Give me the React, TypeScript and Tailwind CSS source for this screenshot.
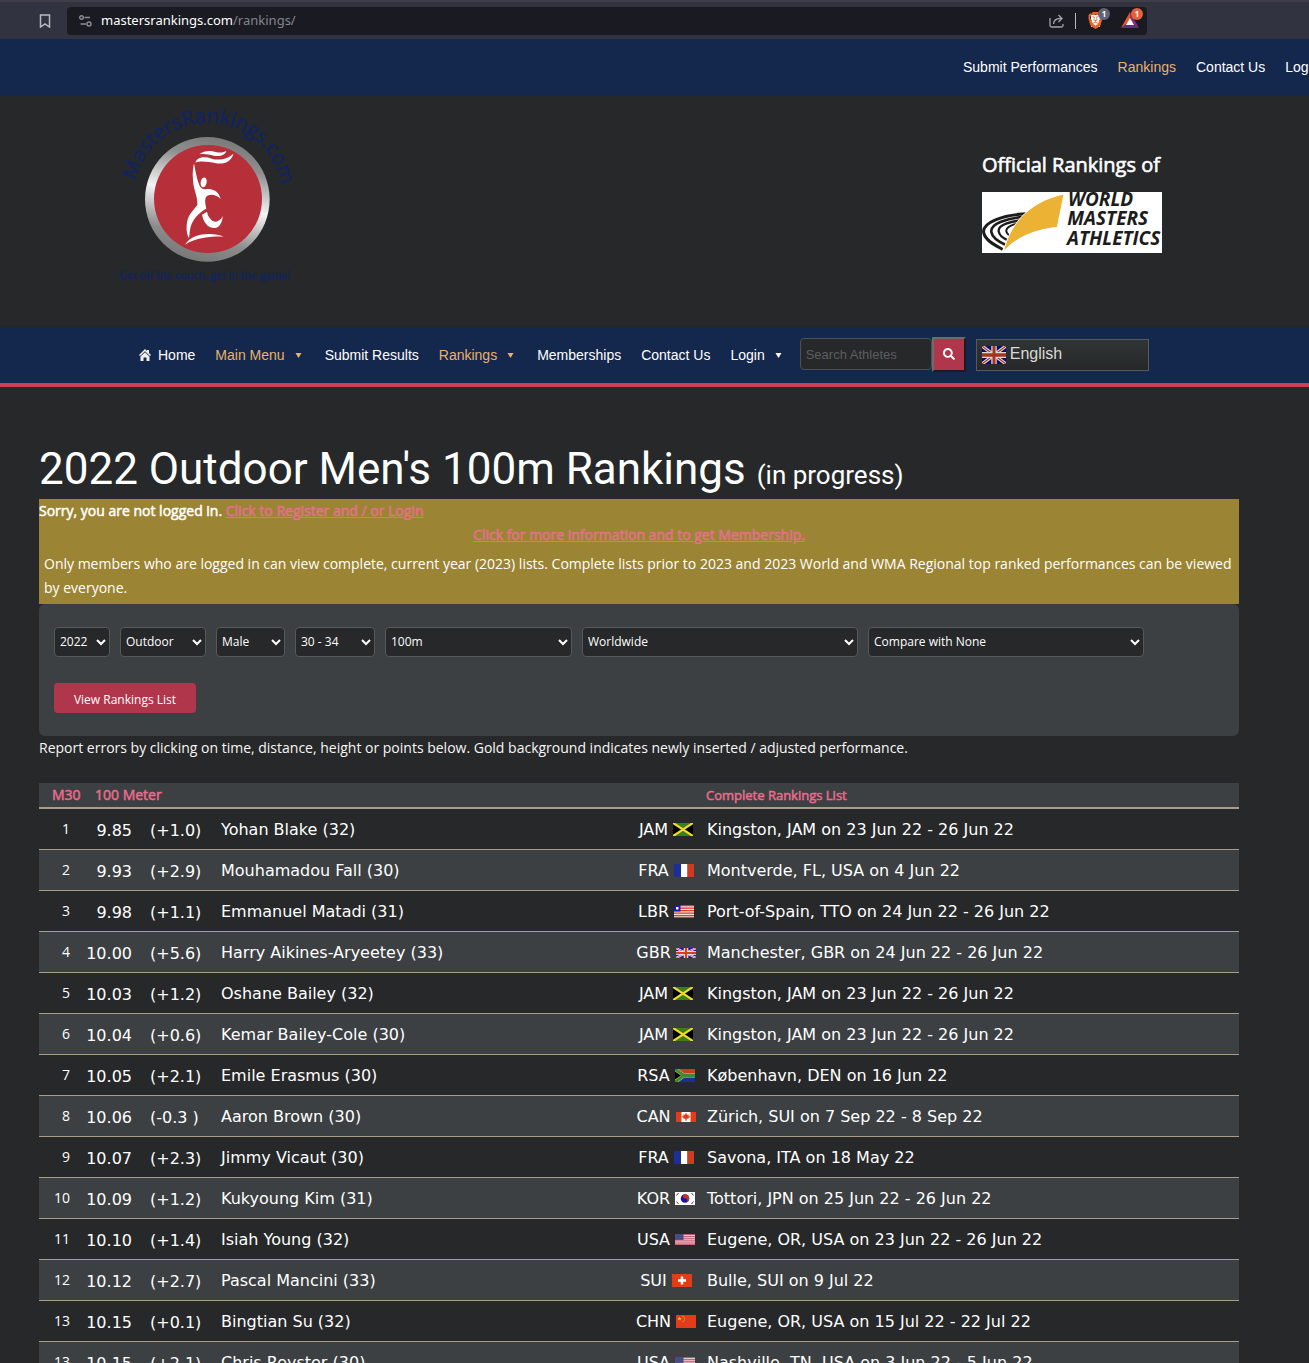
import React from "react";
import { SiBrave } from "react-icons/si";
import { FaSearch } from "react-icons/fa";

type Row = {
  rank: number;
  time: string;
  wind: string;
  name: string;
  code: string;
  place: string;
};

const rows: Row[] = [
  { rank: 1, time: "9.85", wind: "(+1.0)", name: "Yohan Blake (32)", code: "JAM", place: "Kingston, JAM on 23 Jun 22 - 26 Jun 22" },
  { rank: 2, time: "9.93", wind: "(+2.9)", name: "Mouhamadou Fall (30)", code: "FRA", place: "Montverde, FL, USA on 4 Jun 22" },
  { rank: 3, time: "9.98", wind: "(+1.1)", name: "Emmanuel Matadi (31)", code: "LBR", place: "Port-of-Spain, TTO on 24 Jun 22 - 26 Jun 22" },
  { rank: 4, time: "10.00", wind: "(+5.6)", name: "Harry Aikines-Aryeetey (33)", code: "GBR", place: "Manchester, GBR on 24 Jun 22 - 26 Jun 22" },
  { rank: 5, time: "10.03", wind: "(+1.2)", name: "Oshane Bailey (32)", code: "JAM", place: "Kingston, JAM on 23 Jun 22 - 26 Jun 22" },
  { rank: 6, time: "10.04", wind: "(+0.6)", name: "Kemar Bailey-Cole (30)", code: "JAM", place: "Kingston, JAM on 23 Jun 22 - 26 Jun 22" },
  { rank: 7, time: "10.05", wind: "(+2.1)", name: "Emile Erasmus (30)", code: "RSA", place: "København, DEN on 16 Jun 22" },
  { rank: 8, time: "10.06", wind: "(-0.3 )", name: "Aaron Brown (30)", code: "CAN", place: "Zürich, SUI on 7 Sep 22 - 8 Sep 22" },
  { rank: 9, time: "10.07", wind: "(+2.3)", name: "Jimmy Vicaut (30)", code: "FRA", place: "Savona, ITA on 18 May 22" },
  { rank: 10, time: "10.09", wind: "(+1.2)", name: "Kukyoung Kim (31)", code: "KOR", place: "Tottori, JPN on 25 Jun 22 - 26 Jun 22" },
  { rank: 11, time: "10.10", wind: "(+1.4)", name: "Isiah Young (32)", code: "USA", place: "Eugene, OR, USA on 23 Jun 22 - 26 Jun 22" },
  { rank: 12, time: "10.12", wind: "(+2.7)", name: "Pascal Mancini (33)", code: "SUI", place: "Bulle, SUI on 9 Jul 22" },
  { rank: 13, time: "10.15", wind: "(+0.1)", name: "Bingtian Su (32)", code: "CHN", place: "Eugene, OR, USA on 15 Jul 22 - 22 Jul 22" },
  { rank: 13, time: "10.15", wind: "(+2.1)", name: "Chris Royster (30)", code: "USA", place: "Nashville, TN, USA on 3 Jun 22 - 5 Jun 22" },
];

const flagHeights: Record<string, number> = {
  JAM: 13, FRA: 13, LBR: 13, GBR: 10, RSA: 13, CAN: 10, KOR: 13, USA: 11, SUI: 13, CHN: 13,
};

function UnionJack() {
  return (
    <>
      <rect width="40" height="26" fill="#0d0c68" />
      <path d="M0 0L40 26M40 0L0 26" stroke="#dcdad8" strokeWidth="5" />
      <path d="M0 0L40 26M40 0L0 26" stroke="#a8321e" strokeWidth="1.6" />
      <path d="M20 0V26M0 13H40" stroke="#dcdad8" strokeWidth="9" />
      <path d="M20 0V26M0 13H40" stroke="#a8321e" strokeWidth="5" />
    </>
  );
}

function Flag({ code }: { code: string }) {
  const art: Record<string, React.ReactNode> = {
    JAM: (
      <>
        <rect width="40" height="26" fill="#3f7d1c" />
        <path d="M0 0L18 13L0 26ZM40 0L22 13L40 26Z" fill="#000" />
        <path d="M0 0L40 26M40 0L0 26" stroke="#f0dc28" strokeWidth="4.5" />
      </>
    ),
    FRA: (
      <>
        <rect width="14" height="26" fill="#1c2f96" />
        <rect x="14" width="13" height="26" fill="#fff" />
        <rect x="27" width="13" height="26" fill="#cc3d20" />
      </>
    ),
    LBR: (
      <>
        <rect width="40" height="26" fill="#f3e4e2" />
        {[0, 5, 10, 15, 20, 24].map((y) => (
          <rect key={y} y={y} width="40" height="2.6" fill="#d8402c" />
        ))}
        <rect width="13" height="13" fill="#1a1aa8" />
        <rect x="4" y="4" width="5" height="5" fill="#fff" />
      </>
    ),
    GBR: (
      <>
        <rect width="40" height="26" fill="#1414b4" />
        <path d="M0 0L40 26M40 0L0 26" stroke="#fff" strokeWidth="5" />
        <path d="M0 0L40 26M40 0L0 26" stroke="#e03a1c" strokeWidth="2" />
        <path d="M20 0V26M0 13H40" stroke="#fff" strokeWidth="9" />
        <path d="M20 0V26M0 13H40" stroke="#e03a1c" strokeWidth="5" />
      </>
    ),
    RSA: (
      <>
        <rect width="40" height="13" fill="#cc3d20" />
        <rect y="13" width="40" height="13" fill="#1c2f96" />
        <path d="M0 0L18 13H40M18 13L0 26" stroke="#c9cdb0" strokeWidth="8" fill="none" />
        <path d="M0 0L17 13L0 26Z" fill="#000" />
        <path d="M0 3L14 13L0 23" stroke="#e0c030" strokeWidth="3" fill="none" />
        <path d="M0 0L18 13H40M18 13L0 26" stroke="#3f8a2c" strokeWidth="6" fill="none" />
      </>
    ),
    CAN: (
      <>
        <rect width="40" height="26" fill="#fff" />
        <rect width="11" height="26" fill="#e23c1a" />
        <rect x="29" width="11" height="26" fill="#e23c1a" />
        <path d="M20 3L22 8L25 7L24 11L28 11L25 16L20 17.500L15 16L12 11L16 11L15 7L18 8ZM19.300 16H20.700V22H19.300Z" fill="#e23c1a" stroke="#e23c1a" />
      </>
    ),
    KOR: (
      <>
        <rect width="40" height="26" fill="#fff" />
        <circle cx="20" cy="13" r="8.500" fill="#1414a8" />
        <path d="M20 4.500A8.500 8.500 0 0 1 21 21.400A4.200 4.200 0 0 0 20 13A4.200 4.200 0 0 1 20 4.500Z" fill="#c83220" />
        <path d="M3 7L7 2M33 2L37 7M3 19L7 24M33 24L37 19" stroke="#444" strokeWidth="2" />
      </>
    ),
    USA: (
      <>
        <rect width="40" height="26" fill="#ecd9dc" />
        {[0, 5, 10, 15, 20, 24].map((y) => (
          <rect key={y} y={y} width="40" height="2.6" fill="#c0566a" />
        ))}
        <rect width="17" height="14" fill="#4a4a86" />
      </>
    ),
    SUI: (
      <>
        <rect width="40" height="26" fill="#e23c1a" />
        <path d="M20 5V21M12 13H28" stroke="#fff" strokeWidth="5" />
      </>
    ),
    CHN: (
      <>
        <rect width="40" height="26" fill="#e23c1a" />
        <path d="M7 3L8.300 6H11L9 8L10 11L7 9L4 11L5 8L3 6H5.700Z" fill="#f2c52c" />
        <path d="M13 2H15V4H13ZM16 5H18V7H16ZM16 9H18V11H16ZM13 12H15V14H13Z" fill="#f2a52c" />
      </>
    ),
  };
  return (
    <svg width="20" height={flagHeights[code]} viewBox="0 0 40 26" preserveAspectRatio="none" aria-label={code}>
      {art[code]}
    </svg>
  );
}

function Caret() {
  return (
    <svg className="ml-[10px] mr-[3px]" width="7" height="5" viewBox="0 0 7 5" fill="currentColor" aria-hidden>
      <path d="M0.500 0H6.500L3.500 5Z" />
    </svg>
  );
}

function BrowserBar() {
  return (
    <div className="flex h-[39px] items-center border-t-2 border-[#3d3e47] bg-[#313341] pl-[39px] font-['Noto_Sans',sans-serif]">
      <button aria-label="Bookmark" className="mr-4 text-[#b9bac0]">
        <svg width="12" height="14" viewBox="0 0 12 14" fill="none" stroke="currentColor" strokeWidth="1.500">
          <path d="M1.500 1H10.500V13L6 9.800L1.500 13Z" />
        </svg>
      </button>
      <div className="flex h-7 w-[1080px] items-center rounded bg-[#191a22] pr-1 pl-3">
        <svg width="13" height="12" viewBox="0 0 13 12" fill="none" stroke="#8d8e94" strokeWidth="1.400" aria-hidden>
          <circle cx="2.500" cy="2.500" r="1.800" />
          <path d="M5.500 2.500H11M1.500 9H7" />
          <circle cx="10" cy="9" r="2" />
        </svg>
        <p className="ml-[9px] flex-1 text-[13px] text-[#85868c]">
          <span className="text-white">mastersrankings.com</span>/rankings/
        </p>
        <button aria-label="Share" className="text-[#a3a4a9]">
          <svg width="15" height="14" viewBox="0 0 15 14" fill="none" stroke="currentColor" strokeWidth="1.300">
            <path d="M1 4V11.500Q1 13 2.500 13H12.500Q14 13 14 11.500V10" />
            <path d="M9.500 1L13 4.500L9.500 8M13 4.500H11Q5 4.500 4.500 10" />
          </svg>
        </button>
        <span className="ml-[11px] h-4 w-px bg-[#b9bac0]" />
        <button aria-label="Brave Shields" className="relative ml-3 h-[18px] w-[22px]">
          <span className="absolute top-[3px] left-[3px] h-3 w-[9px] bg-white" />
          <SiBrave className="absolute top-0 -left-px text-[#e8622c]" size={17} />
          <span className="absolute -top-1 left-[10px] h-3 w-3 rounded-full bg-[#5f6476] text-center text-[8px] leading-3 font-bold text-white">1</span>
        </button>
        <button aria-label="Brave Rewards" className="relative ml-[11px] h-[18px] w-[22px]">
          <svg className="absolute top-0 left-0" width="18" height="16" viewBox="0 0 18 16" aria-hidden>
            <path d="M9 0L0 16L9 10Z" fill="#e8562c" />
            <path d="M9 0L18 16L9 10Z" fill="#8e2b6a" />
            <path d="M0 16H18L9 9Z" fill="#5b2d86" />
            <path d="M9 6L13 13H5Z" fill="#fff" />
          </svg>
          <span className="absolute -top-1 left-[10px] h-3 w-3 rounded-full bg-[#e8603a] text-center text-[8px] leading-3 font-bold text-white">1</span>
        </button>
      </div>
    </div>
  );
}

function MastersLogo() {
  return (
    <svg width="190" height="190" viewBox="0 0 570 570" role="img" aria-label="MastersRankings.com">
      <defs>
        <linearGradient id="ring" x1="0.630" y1="0" x2="0.370" y2="1">
          <stop offset="0" stopColor="#787878" />
          <stop offset="0.200" stopColor="#8f8f8f" />
          <stop offset="0.500" stopColor="#f4f4f4" />
          <stop offset="0.800" stopColor="#8c8c8c" />
          <stop offset="1" stopColor="#777" />
        </linearGradient>
        <path id="arc" d="M76 241A222 222 0 0 1 510 340" />
      </defs>
      <circle cx="292" cy="298" r="187" fill="url(#ring)" />
      <circle cx="294" cy="297" r="162" fill="#b62f39" />
      <g fill="#fff">
        <path d="M268 163C285 150 300 152 320 157C335 159 343 156 349 153C345 165 330 171 312 167C295 163 282 160 268 163Z" />
        <path d="M256 188C262 170 285 169 305 176C330 183 355 175 370 161C366 182 345 194 318 190C295 185 272 182 256 188Z" />
        <path d="M252 190C257 215 260 235 266 250C270 262 275 268 287 268C308 264 327 275 332 297C322 286 305 280 292 287C284 293 284 303 289 326C270 335 243 360 240 390L237 415C228 400 228 375 234 355C240 340 255 325 262 315C264 290 250 270 249 240C247 220 249 205 252 190Z" />
        <ellipse cx="281" cy="247" rx="9" ry="15" transform="rotate(10 281 247)" />
        <path d="M291 335C293 352 310 370 322 364C331 360 336 355 338 347C338 370 325 386 310 384C292 382 280 365 276 344Z" />
        <path d="M225 434C240 410 270 402 295 402C315 402 330 405 342 410C310 409 260 412 225 434Z" />
      </g>
      <g fill="#112463" stroke="#112463" strokeWidth="1" fontFamily="Open Sans, sans-serif">
        <text fontSize="60">
          <textPath href="#arc">MastersRankings.com</textPath>
        </text>
        <text x="284" y="537" fontSize="32" textAnchor="middle">
          Get off the couch, get in the game!
        </text>
      </g>
    </svg>
  );
}

function WmaLogo() {
  return (
    <svg className="bg-white" width="180" height="61" viewBox="0 0 540 183" role="img" aria-label="World Masters Athletics">
      <g fill="none" stroke="#1c1c1c">
        <path d="M138 65C60 68 0 92 5 122C10 146 40 160 62 172" strokeWidth="9" />
        <path d="M132 74C75 78 24 95 28 120C31 138 52 150 70 158" strokeWidth="8" />
        <path d="M124 84C88 88 47 98 50 118C52 130 66 140 78 145" strokeWidth="7" />
        <path d="M114 94C95 96 71 104 73 118C74 125 82 130 88 133" strokeWidth="6" />
      </g>
      <path d="M64 180C80 110 130 30 246 6L226 106C165 112 100 135 64 180Z" fill="#ebb234" stroke="#fff" strokeWidth="3" />
      <g fill="#1c1c1c" fontFamily="Open Sans, sans-serif" fontWeight="700" fontStyle="italic" fontSize="57">
        <text x="258" y="42">WORLD</text>
        <text x="256" y="100">MASTERS</text>
        <text x="255" y="158">ATHLETICS</text>
      </g>
    </svg>
  );
}

const selects = [
  { label: "Year", value: "2022", width: "w-14" },
  { label: "Season", value: "Outdoor", width: "w-[86px]" },
  { label: "Gender", value: "Male", width: "w-[69px]" },
  { label: "Age group", value: "30 - 34", width: "w-20" },
  { label: "Event", value: "100m", width: "w-[187px]" },
  { label: "Region", value: "Worldwide", width: "w-[276px]" },
  { label: "Comparison", value: "Compare with None", width: "w-[276px]" },
];

export default function App() {
  return (
    <div className="min-h-screen bg-[#262829] font-['Open_Sans',sans-serif] text-sm text-[#f8f7f5]">
      <BrowserBar />

      <nav aria-label="Top" className="flex h-[57px] items-center justify-end overflow-hidden bg-[#14274d] pb-[2px] font-['Liberation_Sans',sans-serif] text-white">
        <div className="flex w-[346px] gap-5 whitespace-nowrap">
          <a href="#submit">Submit Performances</a>
          <a href="#rankings" className="text-[#e9b26a]">Rankings</a>
          <a href="#contact">Contact Us</a>
          <a href="#login">Login</a>
        </div>
      </nav>

      <header className="flex h-[231px] items-start justify-between pr-[147px] pl-[110px]">
        <a href="#home" className="pt-1"><MastersLogo /></a>
        <div className="flex flex-col pt-[54px]">
          <p className="mb-3 text-xl leading-[30px] text-white [-webkit-text-stroke:0.6px]">Official Rankings of</p>
          <WmaLogo />
        </div>
      </header>

      <nav aria-label="Main" className="flex h-[60px] items-center border-b-4 border-[#d03e51] bg-[#14274d] pl-[139px] font-['Liberation_Sans',sans-serif] whitespace-nowrap text-white">
        <div className="flex items-center gap-5">
          <a href="#home" className="flex items-center gap-[7px]">
            <svg width="12" height="12" viewBox="0 0 12 12" fill="#f0efed" aria-hidden>
              <path d="M6 0L8 2V1H10V4L12 6L11 7L6 2.200L1 7L0 6Z" />
              <path d="M6 3.300L10.500 7.500V12H7.500V8.500H4.500V12H1.500V7.500Z" />
            </svg>
            Home
          </a>
          <a href="#menu" className="flex items-center text-[#e9b26a]">Main Menu<Caret /></a>
          <a href="#results">Submit Results</a>
          <a href="#rankings" className="flex items-center text-[#e9b26a]">Rankings<Caret /></a>
          <a href="#memberships">Memberships</a>
          <a href="#contact">Contact Us</a>
          <a href="#login" className="flex items-center">Login<Caret /></a>
        </div>
        <form className="ml-[15px] flex items-center pb-[2px]" onSubmit={(e) => e.preventDefault()}>
          <input
            aria-label="Search Athletes"
            placeholder="Search Athletes"
            className="h-8 w-[132px] rounded border border-[#4c5254] bg-[#262829] px-[5px] text-[13px] placeholder:text-[#5c5e60]"
          />
          <button aria-label="Search" className="flex h-[35px] w-[34px] items-center justify-center border-2 border-t-[#6b6c70] border-r-[#1c1c1f] border-b-[#1c1c1f] border-l-[#6b6c70] bg-[#b0364b]">
            <FaSearch size={12} />
          </button>
        </form>
        <button className="ml-[10px] flex h-8 w-[173px] items-center border border-[#565a5b] bg-linear-to-b from-[#303535] to-[#262728] pl-[5px] text-base text-[#dcd9d5]">
          <svg className="mr-1" width="24" height="18" viewBox="0 0 40 26" preserveAspectRatio="none" aria-hidden>
            <UnionJack />
          </svg>
          <span className="pb-[2px]">English</span>
        </button>
      </nav>

      <main className="pt-[53px] pr-[70px] pl-[39px]">
        <h1 className="h-[59px] font-['Roboto',sans-serif] text-[44px] leading-[59px] font-normal whitespace-nowrap text-white">
          2022 Outdoor Men's 100m Rankings <span className="text-[26px]">(in progress)</span>
        </h1>

        <section className="bg-[#9b8433] pb-1 leading-6 text-white">
          <p className="[-webkit-text-stroke:0.5px]">
            Sorry, you are not logged in. <a href="#register" className="text-[#e76f92] underline">Click to Register and / or Login</a>
          </p>
          <p className="text-center [-webkit-text-stroke:0.5px]">
            <a href="#membership" className="text-[#e76f92] underline">Click for more information and to get Membership.</a>
          </p>
          <p className="px-[5px] pt-[5px]">
            Only members who are logged in can view complete, current year (2023) lists. Complete lists prior to 2023 and 2023 World and WMA Regional top ranked performances can be viewed by everyone.
          </p>
        </section>

        <form className="rounded-md bg-[#3c4042] px-[15px] pt-[23px] pb-[23px] text-xs" onSubmit={(e) => e.preventDefault()}>
          <div className="flex flex-wrap gap-[10px]">
            {selects.map((s) => (
              <select key={s.label} aria-label={s.label} className={`h-[30px] rounded border border-[#54595b] bg-[#262829] px-px pb-[2px] text-white ${s.width}`}>
                <option>{s.value}</option>
              </select>
            ))}
          </div>
          <button className="mt-[26px] h-[30px] w-[142px] rounded bg-[#b0364b] pt-[3px] text-white">View Rankings List</button>
        </form>

        <p className="mb-[23px] leading-6">
          Report errors by clicking on time, distance, height or points below. Gold background indicates newly inserted / adjusted performance.
        </p>

        <table className="w-full table-fixed border-collapse text-left">
          <colgroup>
            <col className="w-[47px]" />
            <col className="w-[46px]" />
            <col className="w-[89px]" />
            <col className="w-[405px]" />
            <col className="w-20" />
            <col />
          </colgroup>
          <thead>
            <tr className="h-[25px] border-b-2 border-[#a89e8a] bg-[#3c4042] whitespace-nowrap text-[#ec6b8e] [-webkit-text-stroke:0.5px]">
              <th className="pl-[13px] font-normal">M30</th>
              <th className="pl-[9px] font-normal" colSpan={4}>100 Meter</th>
              <th className="text-[13px] font-normal">Complete Rankings List</th>
            </tr>
          </thead>
          <tbody className="font-['DejaVu_Sans',sans-serif] text-base text-white">
            {rows.map((r, i) => (
              <tr key={i} className="h-[41px] border-b border-[#a89e8a] even:bg-[#3c4042]">
                <td className="pr-4 text-right font-['Open_Sans',sans-serif] text-sm">{r.rank}</td>
                <td className="pt-1 text-right">{r.time}</td>
                <td className="pt-1 pl-[18px]">{r.wind}</td>
                <td className="pt-[2px]">{r.name}</td>
                <td className="pt-[2px]">
                  <span className="flex items-center justify-center gap-[5px]">
                    {r.code}
                    <Flag code={r.code} />
                  </span>
                </td>
                <td className="pt-[2px] pl-px">{r.place}</td>
              </tr>
            ))}
          </tbody>
        </table>
      </main>
    </div>
  );
}
